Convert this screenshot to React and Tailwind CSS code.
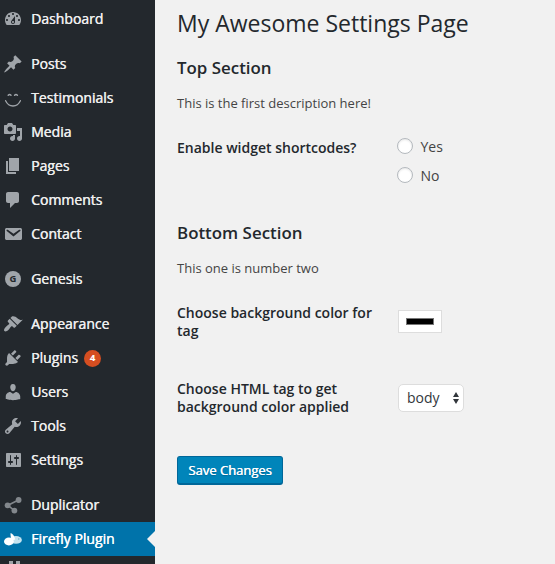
const paths = {
  dashboard:
    'M3.76 16h12.48c1.1-1.37 1.76-3.11 1.76-5 0-4.42-3.58-8-8-8s-8 3.58-8 8c0 1.89.66 3.63 1.76 5zM10 4c.55 0 1 .45 1 1s-.45 1-1 1-1-.45-1-1 .45-1 1-1zM6 6c.55 0 1 .45 1 1s-.45 1-1 1-1-.45-1-1 .45-1 1-1zm8 0c.55 0 1 .45 1 1s-.45 1-1 1-1-.45-1-1 .45-1 1-1zm-5.37 5.55L12 7v6c0 1.1-.9 2-2 2s-2-.9-2-2c0-.57.24-1.08.63-1.45zM4 10c.55 0 1 .45 1 1s-.45 1-1 1-1-.45-1-1 .45-1 1-1zm12 0c.55 0 1 .45 1 1s-.45 1-1 1-1-.45-1-1 .45-1 1-1zm-5 3c0-.55-.45-1-1-1s-1 .45-1 1 .45 1 1 1 1-.45 1-1z',
  posts:
    'M10.44 3.02l1.82-1.82 6.36 6.35-1.83 1.82c-1.05-.68-2.48-.57-3.41.36l-.75.75c-.92.93-1.04 2.35-.35 3.41l-1.83 1.82-2.41-2.41-2.8 2.79c-.42.42-3.38 2.71-3.8 2.29s1.86-3.39 2.28-3.81l2.79-2.79L4.1 9.36l1.83-1.82c1.05.69 2.48.57 3.4-.36l.75-.75c.93-.92 1.05-2.35.36-3.41z',
  media:
    'M13 11V4c0-.55-.45-1-1-1h-1.67L9 1H5L3.67 3H2c-.55 0-1 .45-1 1v7c0 .55.45 1 1 1h10c.55 0 1-.45 1-1zM7 4.5c1.38 0 2.5 1.12 2.5 2.5S8.38 9.5 7 9.5 4.5 8.38 4.5 7 5.62 4.5 7 4.5zM14 6h5v10.5c0 1.38-1.12 2.5-2.5 2.5S14 17.88 14 16.5s1.12-2.5 2.5-2.5c.17 0 .34.02.5.05V9h-3V6zm-4 8.05V13h2v3.5c0 1.38-1.12 2.5-2.5 2.5S7 17.88 7 16.5 8.12 14 9.5 14c.17 0 .34.02.5.05z',
  pages: 'M6 15V2h10v13H6zm-1 1h8v2H3V5h2v11z',
  comments:
    'M5 2h9c1.1 0 2 .9 2 2v7c0 1.1-.9 2-2 2h-2l-5 5v-5H5c-1.1 0-2-.9-2-2V4c0-1.1.9-2 2-2z',
  contact:
    'M3.87 4h13.25C18.37 4 19 4.59 19 5.79v8.42c0 1.19-.63 1.79-1.88 1.79H3.87c-1.25 0-1.88-.6-1.88-1.79V5.79c0-1.2.63-1.79 1.88-1.79zm6.62 8.6l6.74-5.53c.24-.2.43-.66.13-1.07-.29-.41-.82-.42-1.17-.17l-5.7 3.86L4.8 5.83c-.35-.25-.88-.24-1.17.17-.3.41-.11.87.13 1.07z',
  appearance:
    'M14.48 11.06L7.41 3.99l1.5-1.5c.5-.56 2.3-.47 3.51.32 1.21.8 1.43 1.28 2.91 2.1 1.18.64 2.45 1.26 4.45.85zm-.71.71L6.7 4.7 4.93 6.47c-.39.39-.39 1.02 0 1.41l1.06 1.06c.39.39.39 1.03 0 1.42-.6.6-1.43 1.11-2.21 1.69-.35.26-.7.53-1.01.84C1.43 14.23.4 16.08 1.4 17.07c.99 1 2.84-.03 4.18-1.36.31-.31.58-.66.85-1.02.57-.78 1.08-1.61 1.69-2.21.39-.39 1.02-.39 1.41 0l1.06 1.06c.39.39 1.02.39 1.41 0z',
  plugins:
    'M13.11 4.36L9.87 7.6 8 5.73l3.24-3.24c.35-.34 1.05-.2 1.56.32.52.51.66 1.21.31 1.55zm-8 1.77l.91-1.12 9.01 9.01-1.19.84c-.71.71-2.63 1.16-3.82 1.16H6.14L4.9 17.26c-.59.59-1.54.59-2.12 0-.59-.58-.59-1.53 0-2.12l1.24-1.24v-3.88c0-1.13.4-3.19 1.09-3.89zm7.26 3.97l3.24-3.24c.34-.35 1.04-.21 1.55.31.52.51.66 1.21.31 1.55l-3.24 3.25z',
  users:
    'M10 9.25c-2.27 0-2.73-3.44-2.73-3.44C7 4.02 7.82 2 9.97 2c2.16 0 2.98 2.02 2.71 3.81 0 0-.41 3.44-2.68 3.44zm0 2.57L12.72 10c2.39 0 4.52 2.33 4.52 4.53v2.49s-3.65 1.13-7.24 1.13c-3.65 0-7.24-1.13-7.24-1.13v-2.49c0-2.25 1.94-4.48 4.47-4.48z',
  tools:
    'M16.68 9.77c-1.34 1.34-3.3 1.67-4.95.99l-5.41 6.52c-.99.99-2.59.99-3.58 0s-.99-2.59 0-3.57l6.52-5.42c-.68-1.65-.35-3.61.99-4.95 1.28-1.28 3.12-1.62 4.72-1.06l-2.89 2.89 2.82 2.82 2.86-2.87c.53 1.58.18 3.39-1.08 4.65zM3.81 16.21c.4.39 1.04.39 1.43 0 .4-.4.4-1.04 0-1.43-.39-.4-1.03-.4-1.43 0-.39.39-.39 1.03 0 1.43z',
  settings:
    'M18 16V4c0-.55-.45-1-1-1H4c-.55 0-1 .45-1 1v12c0 .55.45 1 1 1h13c.55 0 1-.45 1-1zM8 11h1c.55 0 1 .45 1 1s-.45 1-1 1H8v1.5c0 .28-.22.5-.5.5s-.5-.22-.5-.5V13H6c-.55 0-1-.45-1-1s.45-1 1-1h1V5.5c0-.28.22-.5.5-.5s.5.22.5.5V11zm5-2h-1c-.55 0-1-.45-1-1s.45-1 1-1h1V5.5c0-.28.22-.5.5-.5s.5.22.5.5V7h1c.55 0 1 .45 1 1s-.45 1-1 1h-1v5.5c0 .28-.22.5-.5.5s-.5-.22-.5-.5V9z',
};

const drawings = {
  testimonials: (
    <g fill="none" stroke="currentColor" strokeLinecap="round">
      <path d="M5.200 7.200q1.400-1.400 2.800 0M11.600 7.200q1.400-1.400 2.800 0" strokeWidth="1.500" />
      <path d="M2.600 12.700c1.500 3.200 4.200 5.300 7.400 5.300s5.900-2.100 7.400-5.300" strokeWidth="1.300" />
    </g>
  ),
  duplicator: (
    <g fill="currentColor" className="text-[#82878c]">
      <path d="M5 10.300L15.500 5M5 10.300L11.300 15.500" stroke="currentColor" strokeWidth="1.600" />
      <circle cx="4.600" cy="10.300" r="2.900" />
      <circle cx="15.600" cy="5" r="2.900" />
      <circle cx="11.400" cy="15.600" r="2.900" />
    </g>
  ),
  firefly: (
    <g>
      <ellipse cx="13" cy="10.900" rx="5.900" ry="3.900" fill="#c5e3ef" />
      <path d="M7.600 4c1.800.5 4 3 4.600 6.400l-3.400 1c-.8-2-1.600-5.400-1.200-7.400z" fill="#fff" />
      <ellipse cx="5.900" cy="12.500" rx="4.900" ry="3.900" fill="#fff" />
      <circle cx="15.800" cy="10" r=".7" fill="#6aa5bf" />
    </g>
  ),
  next: <path d="M6-2h4v5h3v-5h4v10H6z" fill="currentColor" />,
};

function Icon({ name }) {
  if (name === 'genesis') {
    return (
      <span className="flex size-5 shrink-0 items-center justify-center">
        <span className="flex size-4 items-center justify-center rounded-full bg-[#a0a5aa] text-[9.5px] leading-none font-bold text-[#23282d] [text-shadow:none]">
          G
        </span>
      </span>
    );
  }
  return (
    <svg viewBox="0 0 20 20" className="size-5 shrink-0 overflow-visible text-[#a0a5aa]">
      {drawings[name] ?? <path d={paths[name]} fill="currentColor" fillRule="evenodd" />}
    </svg>
  );
}

const groups = [
  [['dashboard', 'Dashboard']],
  [
    ['posts', 'Posts'],
    ['testimonials', 'Testimonials'],
    ['media', 'Media'],
    ['pages', 'Pages'],
    ['comments', 'Comments'],
    ['contact', 'Contact'],
  ],
  [['genesis', 'Genesis']],
  [
    ['appearance', 'Appearance'],
    ['plugins', 'Plugins', 4],
    ['users', 'Users'],
    ['tools', 'Tools'],
    ['settings', 'Settings'],
  ],
  [
    ['duplicator', 'Duplicator'],
    ['firefly', 'Firefly Plugin'],
    ['next', ''],
  ],
];

function MenuItem({ icon, label, count }) {
  const active = icon === 'firefly';
  return (
    <li
      className={`relative flex h-[34px] items-center gap-2 pl-[3px] text-sm [text-shadow:0.4px_0_0_currentColor] ${
        active ? 'bg-[#0073aa] text-white' : 'text-[#eeeeee]'
      }`}
    >
      <Icon name={icon} />
      <span>{label}</span>
      {count && (
        <span className="-ml-0.5 flex size-[17px] items-center justify-center rounded-full bg-[#d54e21] text-[9px] font-semibold text-white">
          {count}
        </span>
      )}
      {active && (
        <span className="absolute top-[9px] right-0 border-y-8 border-r-8 border-y-transparent border-r-[#f1f1f1]" />
      )}
    </li>
  );
}

function Radio({ label }) {
  return (
    <label className="flex h-[29px] items-center gap-[7.5px] text-sm">
      <span className="size-4 rounded-full border border-[#b4b9be] bg-white shadow-[inset_0_1px_2px_rgba(0,0,0,0.1)]" />
      <span className="pt-0.5">{label}</span>
    </label>
  );
}

function Row({ label, className, children }) {
  return (
    <div className={`flex ${className}`}>
      <div className="w-[220px] shrink-0 pr-5 text-sm leading-[18px] font-semibold text-[#23282d]">{label}</div>
      {children}
    </div>
  );
}

export default function App() {
  return (
    <div className="flex h-[564px] w-[555px] overflow-hidden bg-[#f1f1f1] font-['Open_Sans',sans-serif] text-[#444444]">
      <ul className="flex w-[155px] shrink-0 flex-col gap-[11px] bg-[#23282d] pt-0.5">
        {groups.map((items, i) => (
          <li key={i}>
            <ul>
              {items.map(([icon, label, count]) => (
                <MenuItem key={icon} icon={icon} label={label} count={count} />
              ))}
            </ul>
          </li>
        ))}
      </ul>

      <main className="flex-1 pt-[9px] pl-[22px]">
        <h1 className="text-[23px] leading-[29px] text-[#23282d]">My Awesome Settings Page</h1>
        <h2 className="mt-[18px] text-[16.9px] leading-6 font-semibold text-[#23282d]">Top Section</h2>
        <p className="mt-[13px] text-[13px] leading-5">This is the first description here!</p>
        <Row label="Enable widget shortcodes?" className="mt-[26px]">
          <div>
            <div className="-mt-2 flex flex-col">
              <Radio label="Yes" />
              <Radio label="No" />
            </div>
          </div>
        </Row>
        <h2 className="mt-[32px] text-[16.9px] leading-6 font-semibold text-[#23282d]">Bottom Section</h2>
        <p className="mt-[13px] text-[13px] leading-5">This one is number two</p>
        <Row label="Choose background color for tag" className="mt-[26px]">
          <span className="mt-[6px] ml-px flex h-[23px] w-[44px] items-center justify-center border border-[#dddddd] bg-white">
            <span className="h-[7px] w-[28px] border border-[#777777] bg-black" />
          </span>
        </Row>
        <Row label="Choose HTML tag to get background color applied" className="mt-[40px]">
          <span className="mt-[4px] ml-px flex h-7 w-[66px] items-center justify-between rounded-[5px] border border-[#dddddd] bg-white pr-1 pl-2 text-sm text-[#32373c]">
            body
            <svg viewBox="0 0 6 12" className="h-3 w-1.5 fill-[#32373c]">
              <path d="M3 0l3 5H0zM3 12l3-5H0z" />
            </svg>
          </span>
        </Row>
        <button className="mt-[40px] flex h-[29px] w-[106px] items-center justify-center rounded-[3px] border border-b-2 border-[#006799] bg-[#0085ba] pt-px text-[13px] text-white [text-shadow:0.4px_0_0_currentColor,0_1px_1px_#006799]">
          Save Changes
        </button>
      </main>
    </div>
  );
}
